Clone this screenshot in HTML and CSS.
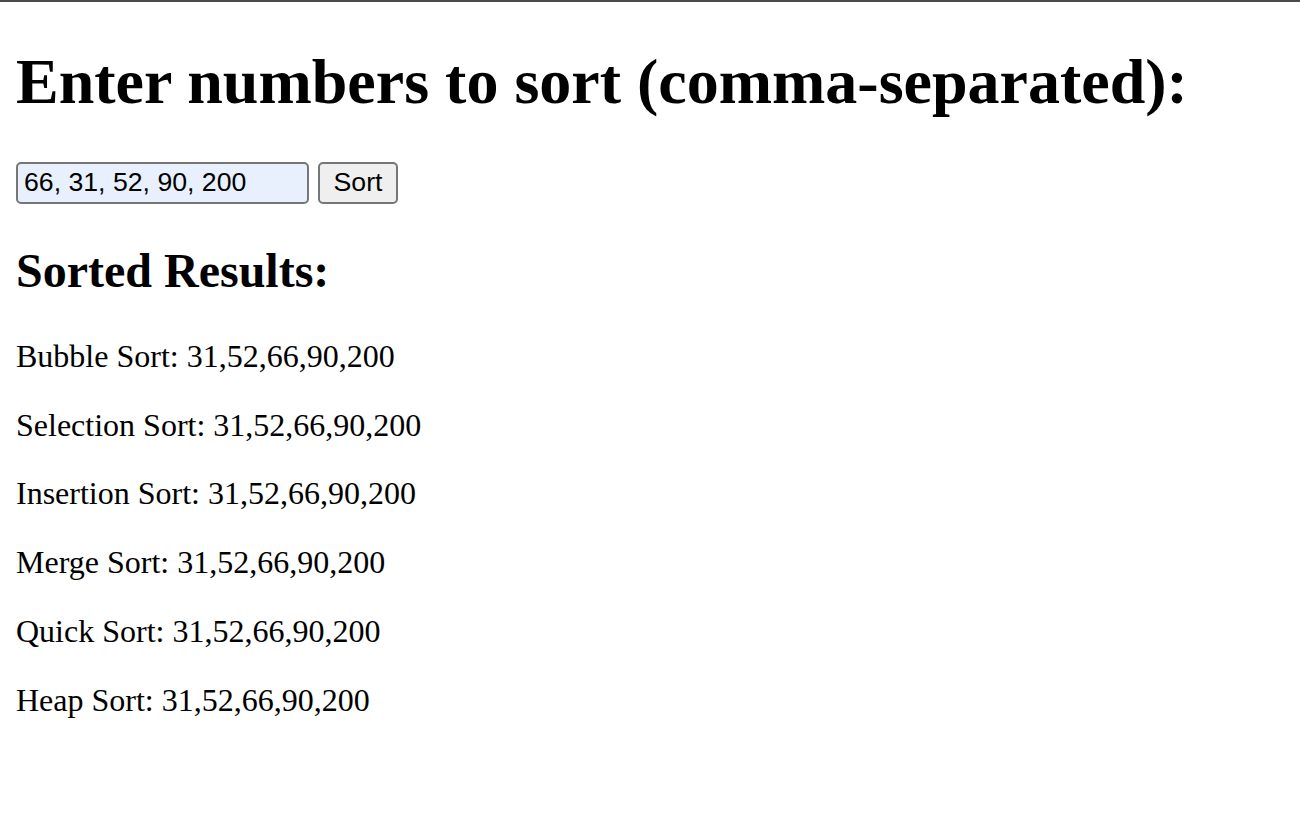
FILE: index.html
```html
<!DOCTYPE html>
<html>
<head>
<meta charset="utf-8">
<title>Sorting</title>
<link rel="stylesheet" href="styles.css">
</head>
<body>
<h1 class="title">Enter numbers to sort (comma-separated):</h1>
<div class="controls">
  <input class="numbers" type="text" value="66, 31, 52, 90, 200">
  <button class="sort-btn" type="button">Sort</button>
</div>
<h2 class="subtitle">Sorted Results:</h2>
<p class="result">Bubble Sort: 31,52,66,90,200</p>
<p class="result">Selection Sort: 31,52,66,90,200</p>
<p class="result">Insertion Sort: 31,52,66,90,200</p>
<p class="result">Merge Sort: 31,52,66,90,200</p>
<p class="result">Quick Sort: 31,52,66,90,200</p>
<p class="result">Heap Sort: 31,52,66,90,200</p>
</body>
</html>
```
FILE: styles.css
```css
html {
  border-top: 2px solid #4a4a4a;
  background: #fff;
}
body {
  margin: 16px;
  font-family: "Liberation Serif", "Times New Roman", serif;
  font-size: 32px;
  color: #000;
}
.title {
  font-size: 64px;
  font-weight: bold;
  margin: 27px 0 43px;
  line-height: 1.15;
}
.controls {
  display: flex;
  gap: 9px;
  align-items: center;
}
.numbers {
  box-sizing: border-box;
  width: 293px;
  height: 42px;
  border: 2px solid #767676;
  border-radius: 5px;
  background: #e8f0fe;
  font-family: "Liberation Sans", Arial, sans-serif;
  font-size: 26.67px;
  padding: 2px 6px;
  color: #000;
  margin: 0;
}
.sort-btn {
  box-sizing: border-box;
  width: 80px;
  height: 42px;
  border: 2px solid #767676;
  border-radius: 5px;
  background: #efefef;
  font-family: "Liberation Sans", Arial, sans-serif;
  font-size: 26.67px;
  color: #000;
  padding: 0 12px;
  margin: 0;
}
.subtitle {
  font-size: 48px;
  font-weight: bold;
  margin: 39px 0 40px;
  line-height: 1.15;
}
.result {
  margin: 32px 0;
  line-height: 1.15;
}
```
